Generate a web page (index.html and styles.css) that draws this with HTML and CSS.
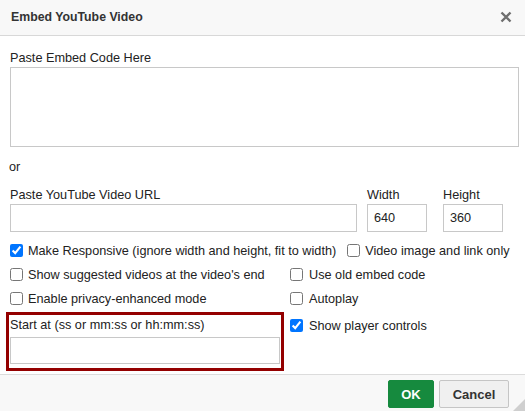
FILE: index.html
```html
<!DOCTYPE html>
<html>
<head>
<meta charset="utf-8">
<link rel="stylesheet" href="styles.css">
</head>
<body>
<div class="dialog">
  <div class="header">
    <span class="title">Embed YouTube Video</span>
    <svg class="close" width="12" height="12" viewBox="0 0 12 12"><path d="M1.5 1.5 L10.5 10.5 M10.5 1.5 L1.5 10.5" stroke="#6f6f6f" stroke-width="2.4" stroke-linecap="butt"/></svg>
  </div>
  <div class="content">
    <div class="lbl">Paste Embed Code Here</div>
    <div class="textarea"></div>
    <div class="or">or</div>
    <div class="url-row">
      <div class="field url">
        <div class="lbl">Paste YouTube Video URL</div>
        <div class="input"></div>
      </div>
      <div class="field dim">
        <div class="lbl">Width</div>
        <div class="input small">640</div>
      </div>
      <div class="field dim">
        <div class="lbl">Height</div>
        <div class="input small">360</div>
      </div>
    </div>
    <div class="row1">
      <label class="cb"><input type="checkbox" checked><span>Make Responsive (ignore width and height, fit to width)</span></label>
      <label class="cb"><input type="checkbox"><span>Video image and link only</span></label>
    </div>
    <div class="grid">
      <label class="cb"><input type="checkbox"><span>Show suggested videos at the video's end</span></label>
      <label class="cb"><input type="checkbox"><span>Use old embed code</span></label>
      <label class="cb"><input type="checkbox"><span>Enable privacy-enhanced mode</span></label>
      <label class="cb"><input type="checkbox"><span>Autoplay</span></label>
      <div class="startbox">
        <div class="lbl">Start at (ss or mm:ss or hh:mm:ss)</div>
        <div class="input start"></div>
      </div>
      <label class="cb controls"><input type="checkbox" checked><span>Show player controls</span></label>
    </div>
  </div>
  <div class="footer">
    <button class="btn ok">OK</button>
    <button class="btn cancel">Cancel</button>
  </div>
  <svg class="grip" width="12" height="12" viewBox="0 0 12 12"><polygon points="12,0 12,12 0,12" fill="#cfcfcf"/></svg>
</div>
</body>
</html>
```
FILE: styles.css
```css
* { box-sizing: border-box; }
html, body { margin: 0; padding: 0; background: #fff; }
body { font-family: "Liberation Sans", Arial, sans-serif; font-size: 12.7px; color: #222; }
.dialog { position: relative; width: 525px; height: 411px; display: flex; flex-direction: column; overflow: hidden; }
.header { height: 36px; flex: none; background: #f8f8f8; border-bottom: 1px solid #d8d8d8; display: flex; align-items: center; justify-content: space-between; padding: 0 13px 1px 11px; }
.title { font-weight: bold; font-size: 12.3px; color: #333; }
.close { display: block; }
.content { flex: 1; padding: 13px 6px 0 10px; }
.lbl { line-height: 16px; height: 17px; padding-top: 1px; white-space: nowrap; }
.textarea { margin-top: 1px; width: 509px; height: 80px; border: 1px solid #c8c8c8; }
.or { margin-top: 12px; line-height: 16px; margin-left: -1px; }
.url-row { margin-top: 11px; display: flex; }
.field .input { margin-top: 1px; }
.input { height: 28px; border: 1px solid #c8c8c8; padding: 0 6px; line-height: 26px; color: #222; }
.url .input { width: 347px; }
.dim { margin-left: 10px; }
.dim + .dim { margin-left: 16px; }
.small { width: 60px; }
.row1 { margin-top: 10px; display: flex; gap: 11px; }
.cb { display: flex; align-items: center; line-height: 16px; height: 16px; white-space: nowrap; }
.cb span { padding-top: 1px; }
.cb input { margin: 0 5px 0 0; width: 13px; height: 13px; accent-color: #0075ff; }
.grid { margin-top: 8px; display: grid; grid-template-columns: 280px 1fr; row-gap: 8px; align-items: start; }
.startbox { margin: -2px 0 0 -4px; width: 278px; height: 59px; border: 3px solid #940000; padding: 1px 1px 0 1px; }
.start { margin-top: 4px; width: 270px; height: 27px; }
.controls { margin-top: 3px; }
.controls input { margin-right: 6px; }
.grid .cb:nth-child(2n) input { margin-right: 6px; }
.footer { height: 37px; flex: none; background: #f8f8f8; border-top: 1px solid #dcdcdc; display: flex; justify-content: flex-end; align-items: flex-start; padding: 5px 16px 0 0; gap: 5px; }
.btn { font-family: "Liberation Sans", Arial, sans-serif; font-size: 13px; font-weight: bold; height: 28px; border-radius: 2px; padding: 0; }
.ok { width: 46px; background: #168a3e; color: #fff; border: 1px solid #168a3e; }
.cancel { width: 70px; background: #f0f0f0; color: #333; border: 1px solid #c5c5c5; }
.grip { position: absolute; right: 0; bottom: 0; }
```
